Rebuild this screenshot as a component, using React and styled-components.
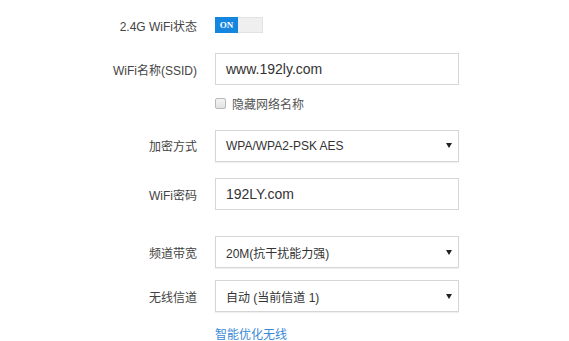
import React from "react";
import styled, { createGlobalStyle } from "styled-components";

const GlobalStyle = createGlobalStyle`
    html, body {
        margin: 0;
        padding: 0;
        background: #ffffff;
    }
    body {
        font-family: "Liberation Sans", "Noto Sans CJK SC", sans-serif;
        color: #333333;
    }
`;

const Form = styled.div`
    display: flex;
    flex-direction: column;
    width: 569px;
    height: 341px;
    padding-top: 9px;
    box-sizing: border-box;
    overflow: hidden;
`;

const Row = styled.div`
    display: flex;
    flex-direction: row;
    align-items: center;
    height: ${props => props.h || 32}px;
    margin-top: ${props => props.mt || 0}px;
`;

const Label = styled.div`
    width: 215px;
    padding-right: 18px;
    box-sizing: border-box;
    text-align: right;
    font-size: 12px;
    color: #444444;
    white-space: nowrap;
`;

const Toggle = styled.div`
    display: flex;
    width: 48px;
    height: 16px;
    border: 1px solid #e2e2e2;
    box-sizing: border-box;
    background: #efefef;
`;

const ToggleOn = styled.div`
    width: 23px;
    height: 16px;
    margin: -1px 0 0 -1px;
    background: #1586e0;
    color: #ffffff;
    font-family: "Liberation Serif", serif;
    font-size: 9px;
    font-weight: 700;
    line-height: 16px;
    text-align: center;
`;

const Field = styled.div`
    display: flex;
    align-items: center;
    justify-content: space-between;
    width: 244px;
    height: 32px;
    padding: 0 6px 0 10px;
    box-sizing: border-box;
    border: 1px solid #d6d6d6;
    background: #ffffff;
    font-size: ${props => (props.select ? 12 : 14)}px;
    color: #333333;
    box-shadow: ${props => (props.select ? "0 1px 1px rgba(0,0,0,0.06)" : "none")};
`;

const Arrow = styled.span`
    width: 0;
    height: 0;
    border-left: 3px solid transparent;
    border-right: 3px solid transparent;
    border-top: 5px solid #222222;
`;

const Check = styled.label`
    display: flex;
    align-items: center;
    font-size: 12px;
    color: #555555;
`;

const Box = styled.span`
    width: 11px;
    height: 11px;
    margin-right: 6px;
    box-sizing: border-box;
    border: 1px solid #b9b9b9;
    border-radius: 2px;
    background: linear-gradient(#f4f4f4, #e2e2e2);
`;

const Link = styled.a`
    font-size: 12px;
    color: #3a8ad6;
    text-decoration: none;
`;

const Spacer = styled.div`
    width: 215px;
`;

const Select = ({ children }) => (
    <Field select>
        <span>{children}</span>
        <Arrow />
    </Field>
);

const App = () => (
    <>
        <GlobalStyle />
        <Form>
            <Row>
                <Label>2.4G WiFi状态</Label>
                <Toggle>
                    <ToggleOn>ON</ToggleOn>
                </Toggle>
            </Row>
            <Row mt={12}>
                <Label>WiFi名称(SSID)</Label>
                <Field>www.192ly.com</Field>
            </Row>
            <Row h={16} mt={10}>
                <Spacer />
                <Check>
                    <Box />
                    隐藏网络名称
                </Check>
            </Row>
            <Row h={33} mt={18}>
                <Label>加密方式</Label>
                <Select>WPA/WPA2-PSK AES</Select>
            </Row>
            <Row mt={16}>
                <Label>WiFi密码</Label>
                <Field>192LY.com</Field>
            </Row>
            <Row mt={26}>
                <Label>频道带宽</Label>
                <Select>20M(抗干扰能力强)</Select>
            </Row>
            <Row mt={12}>
                <Label>无线信道</Label>
                <Select>自动 (当前信道 1)</Select>
            </Row>
            <Row h={16} mt={13}>
                <Spacer />
                <Link href="#">智能优化无线</Link>
            </Row>
        </Form>
    </>
);

export default App;
